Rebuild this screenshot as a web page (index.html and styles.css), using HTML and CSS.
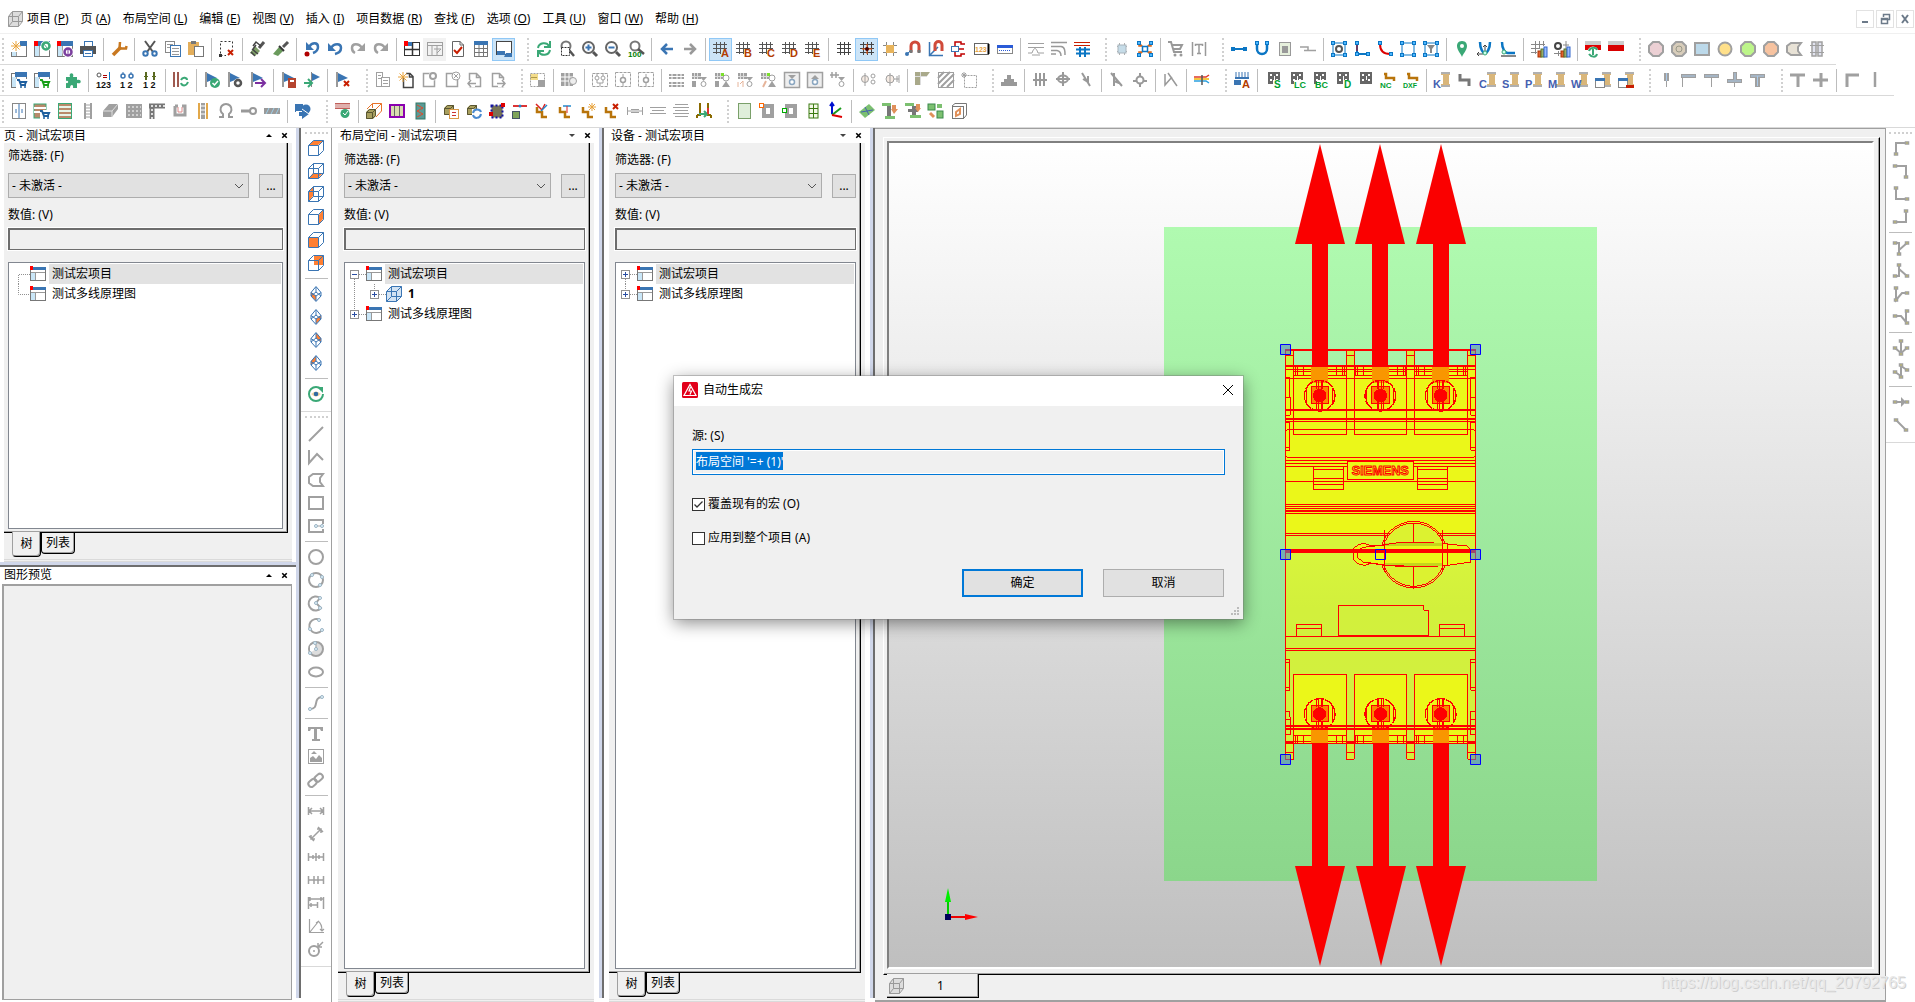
FILE: index.html
```
<!DOCTYPE html>
<html lang="zh-CN">
<head>
<meta charset="utf-8">
<meta name="viewport" content="width=device-width, initial-scale=1">
<title>自动生成宏</title>
<link rel="stylesheet" href="styles.css">
</head>
<body>
<header>
  <nav class="menubar">
    <span class="cube" data-icon="cubeGrey"></span>
    <a href="#">项目 (<u>P</u>)</a><a href="#">页 (<u>A</u>)</a><a href="#">布局空间 (<u>L</u>)</a><a href="#">编辑 (<u>E</u>)</a><a href="#">视图 (<u>V</u>)</a><a href="#">插入 (<u>I</u>)</a><a href="#">项目数据 (<u>R</u>)</a><a href="#">查找 (<u>F</u>)</a><a href="#">选项 (<u>O</u>)</a><a href="#">工具 (<u>U</u>)</a><a href="#">窗口 (<u>W</u>)</a><a href="#">帮助 (<u>H</u>)</a>
    <div class="winbtns">
      <button aria-label="最小化" data-icon="wmin"></button><button aria-label="还原" data-icon="wrestore"></button><button aria-label="关闭" data-icon="wclose"></button>
    </div>
  </nav>
  <div class="toolbar" data-tools="row1"></div>
  <div class="toolbar" data-tools="row2"></div>
  <div class="toolbar last" data-tools="row3"></div>
</header>
<main>
  <div class="column pages">
    <section class="panel">
      <h2 class="caption">页 - 测试宏项目<span class="tri up"></span><button aria-label="关闭" data-icon="capx"></button></h2>
      <div class="frame">
        <div class="sheet high">
          <label for="f1">筛选器: (F)</label>
          <div class="filter"><select id="f1"><option>- 未激活 -</option></select><button>...</button></div>
          <label for="v1">数值: (V)</label>
          <input class="value" id="v1" type="text">
          <ul class="tree">
            <li><span class="twig" data-icon="twTop"></span><span class="ico" data-icon="project"></span><span class="name sel">测试宏项目</span></li>
            <li><span class="twig" data-icon="twEnd"></span><span class="ico" data-icon="project"></span><span class="name">测试多线原理图</span></li>
          </ul>
        </div>
        <div class="tabs"><button class="on">树</button><button>列表</button></div>
      </div>
    </section>
    <div class="hsplit"></div>
    <section class="panel">
      <h2 class="caption tall">图形预览<span class="tri up"></span><button aria-label="关闭" data-icon="capx"></button></h2>
      <div class="preview"></div>
    </section>
  </div>
  <div class="vsplit"></div>
  <div class="vbar left" data-tools="left"></div>
  <section class="panel narrow first">
    <h2 class="caption">布局空间 - 测试宏项目<span class="tri"></span><button aria-label="关闭" data-icon="capx"></button></h2>
    <div class="frame">
      <div class="sheet">
        <label for="f2">筛选器: (F)</label>
        <div class="filter"><select id="f2"><option>- 未激活 -</option></select><button>...</button></div>
        <label for="v2">数值: (V)</label>
        <input class="value" id="v2" type="text">
        <ul class="tree">
          <li><span class="twig" data-icon="twMinus"></span><span class="ico" data-icon="project"></span><span class="name sel">测试宏项目</span></li>
          <li><span class="twig" data-icon="twPass"></span><span class="twig" data-icon="twPlusUp"></span><span class="ico" data-icon="space"></span><span class="name"><b>1</b></span></li>
          <li><span class="twig" data-icon="twPlusUp"></span><span class="ico" data-icon="project"></span><span class="name">测试多线原理图</span></li>
        </ul>
      </div>
      <div class="tabs"><button class="on">树</button><button>列表</button></div>
    </div>
  </section>
  <div class="vsplit"></div>
  <section class="panel narrow">
    <h2 class="caption">设备 - 测试宏项目<span class="tri"></span><button aria-label="关闭" data-icon="capx"></button></h2>
    <div class="frame">
      <div class="sheet">
        <label for="f3">筛选器: (F)</label>
        <div class="filter"><select id="f3"><option>- 未激活 -</option></select><button>...</button></div>
        <label for="v3">数值: (V)</label>
        <input class="value" id="v3" type="text">
        <ul class="tree">
          <li><span class="twig" data-icon="twPlus"></span><span class="ico" data-icon="project"></span><span class="name sel">测试宏项目</span></li>
          <li><span class="twig" data-icon="twPlusUp"></span><span class="ico" data-icon="project"></span><span class="name">测试多线原理图</span></li>
        </ul>
      </div>
      <div class="tabs"><button class="on">树</button><button>列表</button></div>
    </div>
  </section>
  <div class="vsplit"></div>
  <section class="doc">
    <div class="mdi">
      <div class="viewport">
        <svg class="scene" viewBox="889 143 983 824" preserveAspectRatio="xMidYMid meet">
          <defs>
            <linearGradient id="plate" x1="0" y1="0" x2="0" y2="1"><stop offset="0" stop-color="#b0fab0"/><stop offset="1" stop-color="#8bd68b"/></linearGradient>
            <linearGradient id="mid" x1="0" y1="0" x2="0" y2="1"><stop offset="0" stop-color="#d8f53c"/><stop offset=".3" stop-color="#d2f03c"/><stop offset="1" stop-color="#d2f040"/></linearGradient>
            <g id="screw" fill="none" stroke="#f00" stroke-width="3">
              <rect x="-25" y="-26" width="52" height="50" fill="#f98a00"/>
              <circle r="46" stroke-width="4" stroke-dasharray="30 3"/>
              <path d="M-40-24V24M40-24V24M-9-46V-20M-4-46V-20M5-46V-20M9-46V-20M-9 46V20M-4 46V20M5 46V20M9 46V20"/>
              <circle r="19" fill="#f00"/>
            </g>
            <path id="arrow" d="M0 0L25 100H8V223H-8V100H-25Z" fill="#fa0000"/>
          </defs>
          <rect x="1164" y="227" width="433" height="654" fill="url(#plate)"/>
          <g transform="translate(1150 130) scale(.33333)" stroke="#f00" stroke-width="3" fill="none" shape-rendering="crispEdges">
            <path d="M406 710H977V1260H406Z" fill="#ebf719" stroke="none"/>
            <path d="M406 660H430V710H406ZM590 660H613V710H590ZM770 660H793V710H770ZM953 660H977V710H953Z" fill="#d2f03c"/>
            <path d="M406 1211H977V1260H406Z" fill="#d6f53a" stroke="none"/>
            <path d="M406 1260V660H977V1260M430 676H406M590 676H613M770 676H793M953 676H977"/>
            <path d="M406 660H977M406 707H977" stroke-width="6"/>
            <path d="M406 718H977M430 724H590M613 724H770M793 724H953M406 745H977M430 736H590M613 736H770M793 736H953M436 710V736M443 710V736M460 710V736M560 710V736M577 710V736M584 710V736M618 710V736M624 710V736M640 710V736M742 710V736M760 710V736M766 710V736M800 710V736M806 710V736M823 710V736M922 710V736M940 710V736M947 710V736"/>
            <path d="M430 710V913H590V710M613 710V913H770V710M793 710V913H953V710M406 742H419V802H421V856H406M406 802H421M977 742H962V856H977M962 802H977M406 877H419V961H406M406 952H419M977 877H962V961H977M962 952H977"/>
            <path d="M406 840H977M406 867H977" stroke-width="6"/>
            <path d="M406 875H977M412 898H971L977 904M412 898L406 904M412 982H971M406 976L412 982M977 976L971 982M406 991H977M406 1000H592M791 1000H977M406 1009H592M791 1009H977M406 1054H977"/>
            <path d="M592 994H791V1049H592ZM490 1010H581V1078H490ZM490 1018H581M490 1045H581M490 1063H581M802 1010H893V1078H802ZM802 1018H893M802 1045H893M802 1063H893"/>
            <path d="M406 1123H977M406 1129H977M406 1135H977M406 1150H977M406 1211H977M406 1217H977"/>
            <path d="M406 1142H977" stroke-width="6"/>
            <path d="M483 710H534V760H483ZM666 710H717V760H666ZM846 710H897V760H846Z" fill="#f99600" stroke="none"/>
            <use href="#screw" x="509" y="797"/><use href="#screw" x="691" y="797"/><use href="#screw" x="872" y="797"/>
            <text x="691" y="1035" class="brand" text-anchor="middle">SIEMENS</text>
          </g>
          <g transform="translate(1150 540) scale(.33333)" stroke="#f00" stroke-width="3" fill="none" shape-rendering="crispEdges">
            <path d="M406 30H977V610H406Z" fill="url(#mid)" stroke="none"/>
            <path d="M406 608H431V658H406ZM589 608H613V658H589ZM770 608H794V658H770ZM953 608H977V658H953ZM406 637H431M589 637H613M770 637H794M953 637H977" fill="#d2f03c"/>
            <path d="M406 30V658M977 30V658"/>
            <path d="M431 610V403H589V610M613 610V403H770V610M794 610V403H953V610" fill="#ebf719"/>
            <path d="M565 196H821V211H836V287H565ZM439 289V253H515V289M439 265H515M868 289V253H944V289M868 265H944M406 289H977M406 325H977M406 331H977M406 358H419V451H406M406 367H419M406 442H419M977 358H962V451H977M962 367H977M962 442H977M406 514H419V532H421V585H406M406 538H421M977 514H962V585H977M962 538H977"/>
            <path d="M431 586H589M613 586H770M794 586H953M406 604H977M406 610H977M436 586V610M443 586V610M460 586V610M560 586V610M577 586V610M618 586V610M624 586V610M640 586V610M742 586V610M760 586V610M800 586V610M806 586V610M823 586V610M922 586V610M940 586V610"/>
            <path d="M483 560H534V610H483ZM666 560H717V610H666ZM849 560H897V610H849Z" fill="#f99600" stroke="none"/>
            <path d="M406 558H977M406 567H977" stroke-width="6"/>
            <use href="#screw" x="509" y="522"/><use href="#screw" x="691" y="522"/><use href="#screw" x="872" y="522"/>
            <circle cx="791" cy="44" r="95" fill="#dcf230"/><circle cx="791" cy="44" r="100"/>
            <path d="M611 25L626 14L643 10L660 16L705 16L745 9L791 7L850 9L893 12L950 18L962 28V66L893 76L850 79L745 79L691 73L640 66L660 70L645 77L626 72L611 60Z" fill="#ebf719"/>
            <path d="M705 8H877V18H705ZM705 69H877V79H705Z" fill="#c5d51c" stroke="none"/>
            <path d="M622 36V52L640 66L705 76L791 79M622 30L640 22L691 16L745 8M704-30V95M877-30V95M893 10V76M791-52V7M791 79V147"/>
            <path d="M406 33H977" stroke-width="12"/>
          </g>
          <use href="#arrow" x="1320" y="144"/><use href="#arrow" x="1380" y="144"/><use href="#arrow" x="1441" y="144"/>
          <g transform="matrix(1 0 0 -1 0 966)"><use href="#arrow" x="1320"/><use href="#arrow" x="1381"/><use href="#arrow" x="1441"/></g>
          <path d="M1280.500 344.500h10v10h-10zM1470.500 344.500h10v10h-10zM1280.500 549.500h10v10h-10zM1470.500 549.500h10v10h-10zM1280.500 754.500h10v10h-10zM1470.500 754.500h10v10h-10z" fill="rgba(80,128,200,.55)" stroke="#00f"/>
          <path d="M1375.500 549.500h10v10h-10z" fill="none" stroke="#00f"/>
          <path d="M948 916V900" stroke="#0c0" stroke-width="2"/><path d="M948 888L951 902H945Z" fill="#0e0"/>
          <path d="M948 917H967" stroke="#e00" stroke-width="2"/><path d="M978 917L965 920V914Z" fill="#f00"/>
          <rect x="945" y="914" width="6" height="6" fill="#00005a"/>
        </svg>
      </div>
    </div>
    <div class="doctabs"><button><span data-icon="cubeGrey"></span>1</button></div>
  </section>
  <div class="vbar right" data-tools="right"></div>
</main>

<form class="dialog" role="dialog" aria-labelledby="dlgtitle">
  <div class="dlgbar"><span data-icon="eplan"></span><h1 id="dlgtitle">自动生成宏</h1><button type="button" aria-label="关闭" data-icon="dlgx"></button></div>
  <div class="dlgbody">
    <label for="src">源: (S)</label>
    <input id="src" type="text" value="布局空间 '=+ (1)'">
    <label class="tick"><input type="checkbox" checked>覆盖现有的宏 (O)</label>
    <label class="tick"><input type="checkbox">应用到整个项目 (A)</label>
    <div class="actions"><button type="button" class="ok">确定</button><button type="button">取消</button></div>
  </div>
  <span class="sizer" data-icon="sizer"></span>
</form>
<div class="watermark">https://blog.csdn.net/qq_20792765</div>
<script src="script.js"></script>
</body>
</html>
```
FILE: styles.css
```
* { box-sizing: border-box; }
body {
  margin: 0;
  height: 100vh;
  display: flex;
  flex-direction: column;
  overflow: hidden;
  background: #fff;
  color: #000;
  font: 12px/16px "Noto Sans", "Noto Sans CJK SC", sans-serif;
}
button, input, select { font: inherit; color: inherit; border-radius: 0; margin: 0; padding: 0; }
svg { display: block; overflow: visible; }

/* menu */
.menubar { display: flex; align-items: center; gap: 12px; height: 34px; padding: 4px 1px 0 7px; border-bottom: 1px solid #f0f0f0; }
.menubar a { color: inherit; text-decoration: none; white-space: nowrap; }
.menubar .cube { margin-right: -8px; }
.winbtns { display: flex; gap: 2px; margin-left: auto; }
.winbtns button { width: 18px; height: 18px; background: #fff; border: 1px solid #e2e2e2; }

/* tool bars */
.toolbar { display: flex; width: fit-content; height: 31px; padding: 0 8px 0 0; border-bottom: 1px solid #d9d9d9; align-items: center; }
.toolbar.last { width: auto; height: 32px; padding-bottom: 1px; }
.tool { flex: none; width: 23px; height: 23px; border: 1px solid transparent; background: none; padding: 0; display: flex; align-items: center; justify-content: center; }
.tool.on { background: #cce4f7; border-color: #90c8f6; }
.tool.dim { background: #f2f2f2; }
.sep { flex: none; width: 8px; height: 23px; border-left: 1px solid #bdbdbd; background: #fff; margin-left: 4px; margin-right: -4px; }
.grip { flex: none; width: 17px; height: 23px; border-right: 2px dotted #d0d0d0; margin: 0 3px 0 -3px; }
.toolbar .grip:first-child { width: 7px; }

main { flex: 1; min-height: 0; display: flex; }
.column { width: 296px; padding-bottom: 2px; display: flex; flex-direction: column; }
.vsplit { flex: none; width: 5px; background: #d0d7ea; border-right: 2px solid #6e6e6e; margin-bottom: 4px; }
.hsplit { flex: none; height: 5px; background: #d0d7ea; border-bottom: 2px solid #6e6e6e; }
.vbar { flex: none; width: 31px; display: flex; flex-direction: column; align-items: center; border-right: 1px solid #a0a0a0; }
.vbar.right { width: 29px; border: 0; }
.vbar .grip, .vbar .grip:first-child { width: 23px; height: 8px; margin: -4px 0 4px; border: 0; border-bottom: 2px dotted #d0d0d0; }
.vbar .grip:first-child { margin: -2px 0 2px; }
.vbar .sep { width: 23px; height: 1px; border: 0; background: #bdbdbd; margin: 4px 0 3px; }
.vbar .end { flex: none; width: 100%; height: 1px; background: #d9d9d9; margin: 6px 0 2px; }

/* docked panels */
.panel { flex: 1 1 0; min-height: 0; min-width: 0; display: flex; flex-direction: column; }
.panel.narrow { flex: none; width: 266px; padding-left: 5px; }
.panel.narrow.first { width: 267px; padding-left: 6px; }
.caption { flex: none; height: 15px; margin: 0; padding: 0 7px 0 4px; display: flex; align-items: center; font: inherit; }
.caption.tall { height: 17px; }
.narrow .caption { padding: 0 7px 0 2px; }
.caption button { width: 9px; height: 14px; border: 0; background: none; }
.tri { margin: 0 8px 0 auto; border: 3px solid transparent; border-top: 3px solid #444; border-bottom: 0; }
.tri.up { border-top: 0; border-bottom: 3px solid #000; }
.frame { flex: 1; min-height: 0; display: flex; flex-direction: column; margin: 0 4px 0 4px; background: #f0f0f0; border-bottom: 3px double #dadada; }
.narrow .frame { margin: 0 5px 0 0; }
.sheet { flex: 1; min-height: 0; display: flex; flex-direction: column; margin-right: 4px; padding: 9px 4px 3px 4px; border: solid #000; border-width: 0 1px 1px 0; box-shadow: inset -1px -1px #a0a0a0; }
.narrow .sheet { padding-left: 6px; }
.sheet.high { padding-top: 5px; }
.sheet label { height: 21px; }
.sheet.high label:first-child { height: 25px; }
.filter { display: flex; gap: 10px; margin-bottom: 9px; }
.filter select {
  flex: 1; height: 25px; padding: 0 8px 0 3px; border: 1px solid #adadad; appearance: none;
  background: #e1e1e1 url("data:image/svg+xml,%3Csvg xmlns='http://www.w3.org/2000/svg' width='10' height='6'%3E%3Cpath d='M1 1L5 5L9 1' fill='none' stroke='%23555'/%3E%3C/svg%3E") no-repeat right 4px center;
}
.filter button { width: 24px; height: 24px; align-self: flex-end; border: 1px solid #adadad; background: #e1e1e1; }
.value { flex: none; height: 22px; margin-bottom: 3px; border: solid #6d6d6d; border-width: 2px 1px 1px 2px; background: #f0f0f0; outline: 1px solid #fff; }
.tree { flex: 1; min-height: 0; margin: 9px 0 0; padding: 1px; list-style: none; background: #fff; border: 1px solid #828790; }
.tree li { display: flex; height: 20px; align-items: center; }
.twig, .ico { flex: none; }
.name { flex: 1; height: 20px; line-height: 19px; margin-left: 3px; padding-left: 3px; }
.name.sel { background: #e2e2e2; }
.tabs { flex: none; height: 26px; padding-left: 8px; display: flex; align-items: flex-start; }
.tabs button { width: 34px; height: 21px; background: #f0f0f0; border: 1px solid #000; border-top: 0; border-radius: 0 0 4px 4px; box-shadow: inset -1px -1px #a0a0a0; }
.tabs .on { width: 29px; height: 25px; margin-top: -1px; border-left-color: #a0a0a0; }
.preview { flex: 1; margin: 0 4px 0 2px; background: #f0f0f0; border: solid #a0a0a0; border-width: 2px 1px 1px 2px; }

/* drawing window */
.doc { flex: 1; min-width: 0; display: flex; flex-direction: column; background: #f0f0f0; border: solid #a0a0a0; border-width: 1px 1px 2px 0; }
.mdi { flex: 1; min-height: 0; margin: 8px 5px 0 8px; padding: 3px 5px 5px 3px; display: flex; border: 1px solid #000; border-top-color: #fff; border-left-color: #fff; box-shadow: inset -1px -1px #a0a0a0; }
.viewport { flex: 1; min-width: 0; border: 2px solid #808080; border-right-color: #fff; border-bottom-color: #fff; background: linear-gradient(#fff, #bfbfbf); }
.scene { width: 100%; height: 100%; }
.brand { font: bold 38px "Liberation Sans", sans-serif; stroke-width: 3px; }
.doctabs { flex: none; height: 25px; padding-left: 12px; }
.doctabs button { width: 92px; height: 24px; margin-top: -1px; padding: 0 0 0 1px; display: flex; align-items: center; gap: 33px; background: #f0f0f0; border: solid #000; border-width: 0 1px 1px 0; box-shadow: inset -1px -1px #a0a0a0; }

/* dialog window */
.dialog { position: absolute; left: 674px; top: 376px; width: 569px; height: 243px; display: flex; flex-direction: column; background: #f0f0f0; box-shadow: 0 0 0 1px rgba(120,120,120,.4), 0 4px 16px rgba(0,0,0,.45); }
.dlgbar { height: 30px; padding: 0 7px 2px 8px; display: flex; align-items: center; background: #fff; }
.dlgbar h1 { margin: 0 auto 0 5px; font: inherit; }
.dlgbar button { width: 16px; height: 16px; border: 0; background: none; }
.dlgbody { display: flex; flex-direction: column; padding: 22px 18px 0; }
.dlgbody #src { height: 26px; margin: 5px 0 20px; padding: 0 0 3px 3px; border: 1px solid #0078d7; outline: 0; background: #f0f0f0; box-shadow: inset 0 0 0 1px #fff; }
#src::selection { background: #0078d7; color: #fff; }
.tick { display: flex; align-items: center; gap: 3px; height: 18px; margin-bottom: 16px; }
.tick input { appearance: none; width: 13px; height: 13px; border: 1px solid #333; background: #fff; }
.tick input:checked { background: #fff url("data:image/svg+xml,%3Csvg xmlns='http://www.w3.org/2000/svg' width='11' height='11'%3E%3Cpath d='M1.500 5.500L4 8L9.500 2.500' fill='none' stroke='%23333' stroke-width='1.300'/%3E%3C/svg%3E"); }
.actions { display: flex; justify-content: flex-end; gap: 20px; margin: 6px 1px 0; }
.actions button { width: 121px; height: 28px; background: #e1e1e1; border: 1px solid #adadad; }
.actions .ok { border: 2px solid #0078d7; }
.sizer { position: absolute; right: 3px; bottom: 3px; }
.watermark { position: absolute; right: 9px; bottom: 9px; font: 16px/20px "Liberation Sans", sans-serif; color: #e9e9e9; text-shadow: 1px 1px 0 #cfcfcf; }
```
FILE: script.js
```
const G = '#a0a0a0', D = '#555', B = '#3a75b3', V = '#3aa876', O = '#ff7f32', K = '#b8740b', N = '#b33c00';
const L = (d, c = G, w = 1) => `<path d="${d}" fill="none" stroke="${c}" stroke-width="${w}"/>`;
const F = (d, c = G) => `<path d="${d}" fill="${c}"/>`;
const R = (x, y, w, h, f = 'none', s = 'none', k = 1) => `<rect x="${x}" y="${y}" width="${w}" height="${h}" fill="${f}" stroke="${s}" stroke-width="${k}"/>`;
const C = (x, y, r, f = 'none', s = 'none', k = 1) => `<circle cx="${x}" cy="${y}" r="${r}" fill="${f}" stroke="${s}" stroke-width="${k}"/>`;
const T = (x, y, s, c, z = 9) => `<text x="${x}" y="${y}" fill="${c}" font-size="${z}" font-weight="700" font-family="Liberation Sans, sans-serif">${s}</text>`;
const X = (x, y, c = '#c81e00') => L(`M${x} ${y}l5 5m0-5l-5 5`, c, 2);

const win = R(.5, 1.5, 15, 14, '#fff', '#777') + R(4, 0, 12, 5, B) + R(1, 5, 4, 10, '#c9e6f7') + L('M5.500 5V15', G);
const redc = R(0, 0, 4, 5, '#f00');
const star = L('M5 0V10M0 5H10M1.500 1.500L8.500 8.500M8.500 1.500L1.500 8.500', '#e8a33c');
const doc = L('M2.500 1.500H9.500L13.500 5.500V14.500H2.500ZM9.500 1.500V5.500H13.500', G, 1.500);
const grid = c => L('M4.500 1V14M8.500 1V14M12.500 1V14M1 3.500H15M1 7.500H15M1 11.500H15', c);
const gridL = s => L('M3.500 1V13M7.500 1V13M11.500 1V8M0 3.500H14M0 7.500H14M0 11.500H8', D) + T(8, 16, s, N, 11);
const flag = L('M2 0V15', '#777', 1.500) + F('M3 1L13 6L3 10Z', B);
const cart = c => L('M6 8H8L10 13H15M9 10H15L14 12', c, 2) + C(10, 15, 1, c) + C(14, 15, 1, c);
const die = R(3, 0, 12, 12, '#666') + R(5, 2, 2, 2, '#fff') + R(11, 2, 2, 2, '#fff') + R(5, 7, 2, 2, '#fff') + R(11, 7, 2, 2, '#fff') + R(9, 4, 1, 4, '#fff');
const spool = F('M7 0H16V3H15V12H16V15H7V12H9V3H7Z', '#d9b67a') + R(7, 0, 9, 2, '#b0b0b0') + R(7, 13, 9, 2, '#b0b0b0');
const cable = s => spool + T(-1, 16, s, '#4560b0', 11);
const cube = L('M.500 5.500H10.500V15.500H.500ZM.500 5.500L5.500 .500H15.500L10.500 5.500M15.500 .500V10.500L10.500 15.500', B);
const cubeBack = L('M5.500 .500V10.500H15.500M5.500 10.500L.500 15.500', B);
const iso = L('M8 .500L13 6.500V10L8 15.500L3 10V6.500ZM3 6.500L8 10L13 6.500M8 10V15', B) + L('M8 1V6L3 10M8 6L13 10', B);
const node = (x, y) => R(x - 1.500, y - 1.500, 3, 3, '#4db8ff', '#0b76c4');
const yn = (x, y) => R(x - 1.500, y - 1, 3, 2, '#ffe600', G, 1.500);
const cn = (x, y) => C(x, y, 1.500, '#e3f3fb', '#9bb4c4');
const rail = L('M5 0V16M11 0V16', G, 2) + L('M5 2H11M5 5H11M5 8H11M5 11H11M5 14H11', G);
const box3 = F('M1 5L4 2H11V9L8 12H1Z', '#a89f5e') + L('M1.500 5.500H7.500V11.500H1.500ZM1.500 5.500L4.500 2.500H10.500V8.500L7.500 11.500M7.500 5.500L10.500 2.500', '#5a5632');
const sym = (a, b) => R(0, 1, 9, 6, G) + L('M2.500 1V7M5.500 1V7M0 4.500H9', '#ddd') + a + b;
const pour = L('M2 4V9H7V14H12', K, 2.500);
const hexa = 'M5 1H11L15 5V11L11 15H5L1 11V5Z';

const I = {
  cubeGrey: F('M4 1H15V10L11 15H1V6Z', '#ddd') + L('M1.500 5.500H11.500V15.500H1.500ZM1.500 5.500L5.500 .500H15.500L11.500 5.500M15.500 .500V10.500L11.500 15.500M5.500 .500V10.500H15.500M5.500 10.500L1.500 15.500', '#999'),
  wmin: R(5, 10, 6, 2, '#6c7a89'), wrestore: L('M6.500 6V3.500H12.500V8.500H11M4.500 7.500H10.500V12.500H4.500ZM4 8.500H11', '#6c7a89', 1.500), wclose: L('M5 4L11 12M11 4L5 12', '#6c7a89', 2),
  capx: L('M4 4L12 12M12 4L4 12', '#000', 2.800),
  project: R(.500, 1.500, 15, 13, '#fff', '#777') + R(3, 1, 13, 3, B) + R(1, 6, 4, 8, '#c9e6f7') + R(0, 0, 3, 4, '#f00') + L('M5.500 6V14M1 6.500H15', '#999'),
  space: F('M4 1H15V10L11 15H1V6Z', '#d3e3f3') + cube + L('M5.500 .500V10.500H15.500M5.500 10.500L.500 15.500', B),
  eplan: `<rect width="16" height="16" rx="1.500" fill="#e2001a"/>` + L('M8 2.500L14 13.500H2ZM8.500 5L7 9H9.500L8 12.500', '#fff', 1.200),
  dlgx: L('M3 3L13 13M13 3L3 13', '#000'),
  sizer: F('M13 7h2v2h-2zM13 10h2v2h-2zM13 13h2v2h-2zM10 10h2v2h-2zM10 13h2v2h-2zM7 13h2v2H7z', '#bbb'),

  newPage: win + F('M0 0H9V11H0Z', '#fff') + star,
  savePage: win + redc + C(12, 5, 5.500, '#fff') + C(12, 5, 3.500, 'none', V, 2.500) + L('M9 2L14 8', V),
  pagePurple: win + redc + C(11, 11, 5.500, '#fff') + C(11, 11, 3.500, 'none', '#7b3f9e', 2.500) + L('M11 8V14', '#7b3f9e'),
  print: R(4, 0, 9, 5, B) + R(5, 1, 7, 4, '#fff') + F('M0 5H16V13H0Z', D) + R(3.500, 9.500, 9, 6, '#fff', B) + L('M5 12.500H11', B),
  wrench: L('M2 14L10 6', '#c87820', 3.500) + L('M9 1L8.500 7.500H15L15.500 5', '#c87820', 2.500),
  cut: L('M3 0L11 11M13 0L5 11', '#555', 2) + C(3.500, 12.500, 2.200, 'none', B, 2) + C(12.500, 12.500, 2.200, 'none', B, 2),
  copy: R(.500, .500, 9, 11, '#fff', '#888') + R(5.500, 4.500, 10, 11, '#fff', B) + L('M2 3.500H8M2 6.500H5M7 7.500H14M7 10.500H14M7 13.500H14', '#999'),
  paste: R(0, 1, 11, 13, '#e3ae5b') + R(3, 0, 5, 3, '#777') + R(6.500, 5.500, 9, 10, '#fff', '#777'),
  selDel: `<rect x="1.500" y=".500" width="12" height="14" fill="none" stroke="#333" stroke-dasharray="2 2"/>` + R(7, 8, 9, 8, '#fff') + X(9, 9) + R(0, 13, 3, 3, '#333'),
  brush1: L('M14 1L9 7', '#555', 3) + F('M5 5L10 10L5 15L0 12Z', '#7e9f68') + L('M2 8L8 13M1 11L5 15M6 4L3 8M11 5L6 1L3 5', '#444', 1.500),
  brush: L('M15 1L10 6', '#555', 3) + F('M6 6L10 10L5 15L0 13Z', '#6a9a5c') + L('M6 5L11 10', '#333', 2),
  undoList: F('M2 1V9H10Z', B) + L('M5 6C8 1 14 1 14 6C14 9 12 11 9 12', B, 2.500) + C(3, 13, 2.500, '#b00000'),
  undo: F('M1 2V10H9Z', B) + L('M4 7C7 2 14 2 14 7C14 10 12 12 8 13', B, 2.500),
  redo: F('M15 2V10H7Z') + L('M12 7C9 2 2 2 2 7C2 9 3 11 5 12', G, 2.500),
  layout: R(.500, 1.500, 15, 13, '#fff', '#333') + L('M1 8.500H15M8.500 2V14', '#333', 1.500) + R(1, 1, 7, 4, B) + R(0, 0, 4, 5, '#f00'),
  layoutGrey: R(.500, 1.500, 15, 13, 'none', G) + L('M1 4.500H15M5 5V14M10 12L14 8M7 8H14M10 5V14'),
  check: L('M2.500 .500H10L13.500 4V15.500H2.500ZM10 0V4H14', '#666') + L('M4 9L7 12L12 6', '#c81e00', 2),
  table: R(1.500, .500, 13, 15, '#fff', '#777') + R(1, 0, 14, 4, B) + L('M6 4V15M10.500 4V15M1 7.500H15M1 11.500H15', '#777'),
  screen: R(.500, .500, 15, 13, '#fff', '#444') + F('M1 10H9V14H1ZM10 12H16V16H8Z', B),
  refresh: L('M2 7C3 1 11 1 13 5M14 0V6H8M14 9C13 15 5 15 3 11M2 16V10H8', V, 2),
  zoomSel: C(7, 5, 4.500, 'none', '#777', 2) + L('M10 9L15 15', '#555', 2.500) + `<rect x="2.500" y="6.500" width="8" height="8" fill="#fff" stroke="#333" stroke-dasharray="2 1"/>`,
  zoomIn: C(6.500, 6.500, 5.500, '#fff', '#666', 2) + L('M11 11L15 15', '#555', 3) + L('M6.500 3.500V9.500M3.500 6.500H9.500', B, 2),
  zoomOut: C(6.500, 6.500, 5.500, '#fff', '#666', 2) + L('M11 11L15 15', '#555', 3) + L('M3.500 6.500H9.500', B, 2),
  zoom100: C(7, 5, 4.500, 'none', '#777', 2) + L('M10 8L16 13', '#555', 2.500) + T(0, 16, '100', '#008000', 8),
  back: L('M8 3L3 8L8 13M3 8H14', B, 2.500), fwd: L('M8 3L13 8L8 13M13 8H2', '#999', 2.500),
  gridA: gridL('A'), gridB: gridL('B'), gridC: gridL('C'), gridD: gridL('D'), gridE: gridL('E'),
  grid: grid('#444'), snap: grid('#444') + L('M8 3V13M3 8H13', '#ff5500') + C(8, 8, 2, '#400'),
  gsel: L('M4.500 1V15M11.500 1V15M1 4.500H15M1 11.500H15', '#888') + R(4, 4, 8, 8, '#e8b45c'),
  magnet: L('M6 11V5A4 4 0 0 1 14 5V11', '#d04a3a', 3) + L('M6 9V12M14 9V12', '#777', 3) + C(2, 13, 2, B) + L('M2 13L5 10', B),
  magnetAxis: L('M1.500 1V14.500H15M1 15L10 6', B, 1.500) + L('M7 10V4A3.500 3.500 0 0 1 14 4V10', '#d04a3a', 3),
  conn: R(.500, 5.500, 7, 5, '#fff', B) + L('M4 5V1H10V3H14M4 11V15H10V13H14M8 8H13', '#c00000', 1.500),
  ruler123: R(.500, 2.500, 14, 11, '#fff', '#666') + T(1, 11, '123', '#e8a33c', 7) + L('M14.500 3V13', '#000', 2),
  ruler: R(.500, 4.500, 15, 8, '#fff', '#888') + R(0, 4, 16, 3, '#2a5bd7') + `<path d="M2 9.500H14" stroke="#2a5bd7" stroke-dasharray="1 1"/>`,
  wave: L('M0 2.500H16M0 6.500H16M0 12H4C6 6 8 6 10 12H16M4 14H12'),
  rss: L('M0 1.500H16M0 5.500H10C14 6 14 10 14 14M0 9.500H6C9 10 10 12 10 15M0 13H5', '#999', 1.500),
  lattice: L('M0 1.500H16M0 4.500H16', '#c81e00') + L('M2 8.500H16M2 12.500H16M6 6V16M11 6V16', '#0b76c4', 2),
  chip: L('M3 5.500H13M3 10.500H13M5.500 2V14M10.500 2V14', '#b0b0b0') + R(4, 4, 8, 8, '#c6dce8', '#a8b4bc'),
  tree: L('M3 3L6 6M13 3L10 6M3 13L6 10M13 13L10 10M2 2V5H5M14 2V5H11M2 14V11H5M14 14V11H11', '#d9691e', 1.500) + R(5.500, 5.500, 5, 5, '#fff', '#0b76c4', 1.500) + node(2, 2) + node(14, 2) + node(2, 14) + node(14, 14),
  cart: L('M0 1H3L6 11H14M4 4H14L12 8H5', '#999', 2) + C(7, 14, 1.500, '#999') + C(13, 14, 1.500, '#999'),
  tbox: L('M1.500 1V15M14.500 1V15M4.500 5V3.500H11.500V5M8 4V12M6 12.500H10', '#999', 1.500),
  link1: L('M2 8H14', '#0b76c4', 2) + R(0, 6, 4, 4, '#0b76c4') + R(12, 6, 4, 4, '#0b76c4'),
  link2: L('M3 3V8A5 5 0 0 0 13 8V3', '#0b76c4', 2.500) + node(3, 2) + node(13, 2),
  sq: R(2.500, 1.500, 11, 13, '#e6f0dc', '#999') + R(5, 5, 6, 7, '#999'), jog: L('M0 6H8V9.500H16M4 9.500H8', G, 1.500),
  nodes: L('M2 2H14V14H2Z', '#0b76c4') + C(8, 8, 3, 'none', '#555', 2) + node(2, 2) + node(14, 2) + node(2, 14) + node(14, 14),
  nodeL: L('M3 3V13H13', '#0b76c4', 2) + L('M3 2V10', '#c00') + node(3, 2) + node(3, 13) + node(14, 13),
  nodeC: L('M3 3C3 10 6 13 13 13', '#d00', 2) + node(3, 2) + node(14, 13),
  nodeR: L('M2 2H14V14H2Z', '#0b76c4') + node(2, 2) + node(14, 2) + node(2, 14) + node(14, 14),
  nodeF: L('M2 2H14V14H2Z', '#0b76c4') + F('M4 4H12L9 8V12H7V8Z', '#888') + node(2, 2) + node(14, 2) + node(2, 14) + node(14, 14),
  pin: F('M8 0C12 0 13 3 13 5C13 9 9 13 8 16C7 13 3 9 3 5C3 3 4 0 8 0Z', V) + C(8, 5, 2, '#fff'),
  u1: L('M3 1C3 8 6 12 8 12C10 12 13 8 13 1', '#0b76c4', 2.500) + L('M8 4V10M6 6L8 4L10 6M0 13H6M2 11L0 13L2 15', '#444') + C(8, 12, 2, '#cfe', V),
  u2: L('M2 1C2 8 5 12 8 12H15', '#0b76c4', 2.500) + L('M1 15H16', '#888', 2) + C(4, 11, 2, '#cfe', V),
  g1: L('M4.500 0V13M8.500 0V7M12.500 0V5M0 3.500H14M0 7.500H9M0 11.500H6', '#888') + R(7, 10, 3, 6, '#e06030', '#a30') + R(10, 8, 3, 8, '#9a6', '#573') + R(13, 6, 3, 10, '#9bf', '#36c'),
  g2: C(4, 5, 3, 'none', '#444', 2) + L('M9 4H15M12 0V8M0 12.500H7M4.500 10V15', '#888') + R(7, 10, 3, 6, '#e06030', '#a30') + R(10, 8, 3, 8, '#9a6', '#573') + R(13, 6, 3, 10, '#9bf', '#36c'),
  redS: R(0, 0, 16, 4, '#ccc') + R(0, 4, 16, 5, '#e00000') + C(8, 11, 5.500, '#fff') + L('M4 10C5 6 11 6 12 9M12 13C11 17 6 16 4 13M8 8V14', V, 2),
  red: R(0, 0, 16, 4, '#ccc') + R(0, 4, 16, 6, '#d80000'),
  s1: F(hexa, '#ecd0d4') + L(hexa, G, 2), s2: F(hexa, '#d8cdbb') + L(hexa, G, 2) + C(8, 8, 3, 'none', '#998'),
  s3: R(1, 2, 14, 12, '#bcd9ea', G, 2), s4: C(8, 8, 6.500, '#ffe08a', G, 2), s5: F(hexa, '#bdf58a') + L(hexa, G, 2), s6: F(hexa, '#f7c3a0') + L(hexa, G, 2),
  s7: F('M5 2H15L12 6V10L15 14H5L1 11V5Z', '#e8e2d6') + L('M5 2H15L12 6V10L15 14H5L1 11V5Z', G, 2),
  s8: R(3, 1, 4, 14, '#e2e4f0', G, 1.500) + R(9, 1, 4, 14, '#e2e4f0', G, 1.500) + L('M1 4.500H15M1 11.500H15'),

  winCart: win + F('M5 7H16V16H5Z', '#fff') + cart('#1f5f9f'), winCartG: win + F('M5 7H16V16H5Z', '#fff') + cart('#18a018'),
  puzzle: F('M1 5H5C3 0 10 0 8 5H12V8C17 6 17 13 12 11V16H8C9 12 5 12 5 16H1V11C4 12 4 8 1 9Z', V),
  n123a: C(3, 3, 2, 'none', '#555') + L('M7 3.500H11M7 5.500H11', '#a00') + L('M13.500 0V8', '#0b76c4') + T(0, 16, '123', '#111', 9),
  n123b: C(4, 4, 2, 'none', B, 1.500) + C(12, 4, 2, 'none', B, 1.500) + L('M4 0V2M12 0V2', B) + T(1, 16, '1 2', '#111', 9),
  n123c: L('M4 0V8M12 0V8', '#5a6a20', 2) + L('M2 4.500H6M10 4.500H14', '#5a6a20') + T(1, 16, '1 2', '#111', 9),
  lines: L('M1 0V15M5 0V15', '#a05a50', 2) + L('M8 8C10 4 14 6 14 8M15 10C13 15 9 14 8 11', V, 2),
  flagCheck: flag + C(11, 11, 5, V) + L('M8.500 11L10.500 13L14 9', '#fff', 1.500), flagGear: flag + C(11, 11, 4.500, '#fff') + C(11, 11, 3, '#fff', '#555', 2.500),
  flagArrow: flag + L('M5 11H14M11 7L15 11L11 15', '#7b2fa0', 2), flagBook: flag + R(7, 6, 8, 10, '#b5442e') + R(9, 8, 4, 2, '#fff'),
  flagIn: L('M7.500 0V15', '#888') + F('M8 1L16 5L8 9Z', B) + L('M0 11H7M4 7L8 11L4 15', V, 2), flagDel: flag + X(9, 9),
  docs: R(1.500, .500, 6, 14, 'none', G) + R(6.500, 5.500, 8, 9, '#fff', G) + L('M3 3.500H6M3 6.500H6M8 8.500H13M8 11.500H13'),
  newDoc: L('M5.500 6V15.500H15V4.500L12 1.500H8M11.500 2V5H15', '#444', 1.500) + star,
  docA: doc + C(12, 4, 4.500, '#fff') + C(12, 4, 3, '#fff', G, 2), docB: doc + C(12, 4, 4, '#fff', G) + L('M10 2L14 6M14 2L10 6'),
  docL: doc + F('M0 8H8V15H0Z', '#fff') + L('M9 11.500H1M4 8L1 11.500L4 15', G, 1.500), docR: doc + F('M8 8H16V15H8Z', '#fff') + L('M7 11.500H15M12 8L15 11.500L12 15', G, 1.500),
  yel: R(0, 2, 8, 6, '#f3dc8a') + L('M1 5.500H7', '#b09a4a') + R(8, 8, 7, 7, G) + `<rect x=".500" y="1.500" width="14" height="13" fill="none" stroke="#a0a0a0" stroke-dasharray="2 1"/>`,
  gridg: R(0, 1, 12, 13, G) + L('M4 1V14M8 1V14M0 5H12M0 9H12', '#fff') + C(12, 9, 3.500, '#eee', G),
  da: `<rect x=".500" y="1.500" width="15" height="13" fill="none" stroke="#a0a0a0" stroke-dasharray="3 1"/>` + C(5, 6, 2, 'none', G) + C(11, 6, 2, 'none', G) + L('M5 1V4M11 1V4M5 8V11H11V8M8 11V14'),
  db: `<rect x=".500" y=".500" width="15" height="14" fill="none" stroke="#a0a0a0" stroke-dasharray="3 1"/>` + C(8, 8, 2.500, 'none', G, 1.500) + L('M8 2V5M8 11V14'),
  w1: L('M0 3H15M0 6H15M0 11H15M0 14H15', G, 2) + L('M3 0V16M8 0V16M12 0V16', '#fff'),
  f1: sym(F('M8 5H15L11.500 9Z'), C(11.500, 12, 2.500, 'none', G)) + R(0, 9, 4, 6, G),
  f2: sym(C(11, 6, 3, '#fff', G), F('M7 15H15L11 9Z')) + R(0, 9, 4, 6, G) + R(6, 1, 3, 3, '#7be02a'),
  f3: sym(F('M8 5H15L11.500 9Z'), C(11.500, 12, 2.500, 'none', G)) + L('M0 15V10M5 15V9L2 12', '#e6b49a'),
  f4: sym(C(11, 6, 3, '#fff', G), F('M7 15H15L11 9Z')) + R(6, 1, 3, 3, '#7be02a') + L('M2 15L5 9', '#e6b49a', 2),
  f5: R(.500, .500, 15, 15, '#eee', G, 1.500) + F('M4 3H12L8 7Z') + C(8, 10, 2.500, '#fff', '#8aa6c0', 1.500), f6: R(.500, .500, 15, 15, '#eee', G, 1.500) + F('M4 7H12L8 3Z') + C(8, 10, 2.500, '#fff', '#8aa6c0', 1.500),
  f7: L('M0 3H9M2 0V6M6 0V6', G, 1.500) + F('M8 5H15L11.500 9Z') + C(11.500, 12, 2.500, 'none', G),
  c1: C(4, 7, 3.500, '#f7ece4', G) + L('M4 1V14') + C(12, 4, 2, 'none', G) + C(12, 10, 2, 'none', G), c2: C(6, 7, 4, '#f7ece4', G) + L('M6 1V14M10 7H15M13 4V10M15 3V11'),
  tri: F('M0 0H15L12 4H6V13H0Z', '#a9a98a') + L('M0 4.500H12M5.500 0V13', '#ddd'),
  hatch: R(.500, .500, 15, 15, '#fff', G) + L('M0 6L6 0M0 12L12 0M3 15L16 2M9 15L16 8', G, 2),
  dash: `<rect x="3.500" y="3.500" width="12" height="12" fill="none" stroke="#a0a0a0" stroke-dasharray="2 1"/>` + L('M3 0V6M0 3H6M1 1L5 5M5 1L1 5'),
  stamp: F('M6 3H10V7H13V10H16V14H0V10H3V7H6Z', '#999'),
  x1: L('M1 8H15M4 1V14M8 1V14M12 1V14', '#999', 2), x2: L('M1 7H15M8 0V14', '#999', 2) + `<ellipse cx="8" cy="7" rx="5" ry="3.500" fill="none" stroke="#999" stroke-width="2"/>`,
  x3: L('M4 1L12 14M10 4V10L5 7', '#999', 2), x4: L('M2 1L13 14M5 1V9L10 11M5 14V9', '#999', 2), x5: L('M1 9H15M8 1V15', '#999', 2) + C(8, 8, 3.500, '#fff', '#999', 2),
  x6: L('M2 2V13L9 5M5 1L14 14', '#999', 1.500),
  rainbow: L('M0 5H12L15 3', '#e03a2a', 1.500) + L('M0 7H15', '#f2b200', 1.500) + L('M0 9H12L15 11', '#2aa0e0', 1.500) + L('M8 3V13', '#555', 1.500),
  comb: L('M2 0V5M5 0V5M8 0V5M11 0V5M14 0V5', B) + R(1, 5, 14, 2, B) + R(0, 8, 10, 5, B) + F('M7 7H16V16H7Z', '#fff') + T(8, 16, 'A', N, 11),
  dS: die + R(8, 8, 9, 9, '#fff') + T(9, 16, 'S', '#00a030', 10), dLC: die + R(6, 8, 11, 9, '#fff') + T(6, 16, 'LC', '#00a030', 9), dBC: die + R(6, 8, 11, 9, '#fff') + T(4, 16, 'BC', '#00a030', 9),
  dD: die + R(9, 8, 9, 9, '#fff') + T(10, 16, 'D', '#00a030', 10), dd: die,
  NC: L('M4 2H6V6H14V9', K, 2.500) + T(0, 16, 'NC', '#00a030', 8), DXF: L('M4 2H6V6H14V9', K, 2.500) + T(0, 16, 'DXF', '#00a030', 7),
  kK: cable('K'), kC: cable('C'), kS: cable('S'), kP: cable('P'), kM: cable('M'), kW: cable('W'), kj: L('M3 2V8H12V14', '#777', 3),
  kt: spool + R(.500, 6.500, 9, 9, '#fff', '#888') + R(0, 6, 10, 3, B), kr: spool + R(.500, 6.500, 9, 9, '#fff', '#888') + R(0, 6, 10, 3, B) + R(8, 13, 8, 3, '#c81e00'),
  p1: R(6, 1, 5, 8, G) + L('M8.500 9V15') + L('M8.500 1V9', '#a9c9e8'), p2: R(0, 2, 15, 4, G) + L('M1.500 5V15') + L('M1 4H14', '#a9c9e8'),
  p3: R(0, 2, 15, 4, G) + L('M7.500 5V15') + L('M1 4H14', '#a9c9e8'), p4: R(0, 7, 15, 4, G) + R(6, 0, 4, 7, G) + L('M7.500 11V15') + L('M1 9H14M8 1V8', '#a9c9e8'),
  p5: R(0, 2, 15, 4, G) + R(5, 6, 5, 9, G) + L('M1 4H14M7.500 4V14', '#a9c9e8'),
  t1: L('M0 3H15M8 3V15', G, 3), t2: L('M0 8H15M8 1V15', G, 3), t3: L('M3 15V3H15', G, 3), t4: L('M8 0V15', G, 2.500),

  cab: R(1.500, .500, 13, 15, '#fff', '#888') + L('M8 1V15M5 6V10M11 6V10', '#3a75b3'),
  mcart: R(0, 1, 12, 14, '#b98a6a', V) + L('M0 5H12M0 9H12', '#fff', 2) + R(6, 7, 10, 9, '#fff') + cart('#1f5f9f'),
  mlist: R(1.500, .500, 13, 15, '#b98a6a', V) + L('M2 4H14M2 8H14M2 12H14', '#e8f4e8', 2),
  rail, duct: F('M0 8L6 1H15V6L9 14H0Z', G) + L('M0 8H9V14M9 8L15 1', '#e0e0e0'),
  perf: R(0, 1, 16, 14, G) + `<path d="M2 4H15M2 8H15M2 12H15" stroke="#fff" stroke-width="1" stroke-dasharray="2 2"/>`,
  corner: L('M0 3H16M3 3V16', '#777', 5) + `<path d="M2 3H16M3 6V16" stroke="#ddd" stroke-width="2" stroke-dasharray="2 2"/>`,
  cup: L('M3 3V12H13V3H10M3 3H6', G, 3) + L('M6 4V9H10V4', '#d88'),
  rail2: L('M4 0V16M12 0V16', '#e2a84a', 2) + R(6, 0, 4, 16, G) + L('M6 3H10M6 7H10M6 11H10', '#fff'),
  omega: L('M1 14H5V11A5.500 5.500 0 1 1 11 11V14H15', '#999', 2), key: L('M0 8H10', '#999', 3) + C(12, 8, 3, '#fff', '#999', 2), strip: R(0, 5, 16, 6, '#999') + L('M2 11L5 5M7 11L10 5M12 11L15 5', '#9cd0ea'),
  place: R(0, 1, 8, 8, B) + C(11, 6, 4.500, B) + L('M3 15V10H7', '#fff', 4) + F('M4 9H7V6L14 11L7 16V13H4Z', B) + L('M7 6L14 11', '#fff'),
  brick: R(0, 0, 15, 6, '#c0605a') + L('M0 2H15M0 4H15', '#fff') + C(10, 10.500, 4.500, V) + L('M8 10L10 12L13 8', '#fff'),
  box1: L('M6.500 .500H15.500V8L10 14M6.500 .500L1 6M15.500 .500L9 7M6.500 .500V5', '#e8732a') + `<g transform="translate(-1 4)">${box3}</g>`, purp: R(1, 2, 14, 12, '#d8dcb0', '#8a00b0', 2) + L('M5.500 3V13M10.500 3V13', '#666'),
  spring: R(4, 0, 9, 16, '#5a9a96', '#376') + L('M5 2L11 5L5 8L11 11L5 14', '#e04a2a'),
  b1: box3 + R(6.500, 6.500, 9, 9, '#fff', '#d99a4a') + L('M9 9.500H13M9 12.500H13', '#c33'), b2: box3 + R(6, 6, 10, 10, '#fff') + L('M7 10C8 5 14 6 15 9M15 11C14 16 8 16 7 12', '#4a8ad0', 2),
  b3: `<rect x="2.500" y="2.500" width="11" height="12" fill="#777455" stroke="#1414a0" stroke-width="2" stroke-dasharray="2 2"/>` + R(0, 9, 4, 4, '#d00') + R(12, 0, 4, 4, '#d00'),
  b4: L('M1 3H15', '#d33', 2) + C(8, 3, 1.500, '#28c') + R(.500, 8.500, 7, 7, '#7fa55a', '#456'), b5: pour + L('M1 1L7 7M10 1L7 7', '#d22', 1.500) + L('M6 8L12 2', '#28c', 1.500),
  b6: pour + L('M5 3H13', '#28c', 1.500) + L('M9 3V10', '#d22'), b7: pour + L('M11 0V8M7 4H15M8 1L14 7M14 1L8 7', '#e8a33c'), b8: pour + X(9, 1),
  h1: L('M0 8H16M.500 4V12M15.500 4V12M4 6.500H12M4 9.500H12'), h2: L('M0 4.500H16M2 7.500H14M0 10.500H16'), h3: L('M2 1.500H15M0 4.500H16M2 7.500H15M0 10.500H16M2 13.500H15'),
  h4: L('M4 0V12H1M12 0V12H15M1 12V15M15 12V15', '#8a6a00', 2) + L('M3 11H11M8 8L11 11L8 14', V, 2) + R(11, 5, 2, 6, '#d33'),
  r1: R(2.500, .500, 12, 15, '#dfeeda', '#7aa06a'), r2: R(3, 1, 12, 14, G) + R(7, 5, 4, 6, '#fff') + R(.500, .500, 4, 4, '#fff', '#f60'), r3: R(3, 1, 12, 14, G) + R(7, 5, 4, 6, '#fff') + R(.500, 5.500, 4, 4, '#fff', '#0a0'),
  r4: R(4, 1, 9, 14, '#f4f8e8', '#3a7a10') + L('M8.500 1V15M4 5.500H13M4 10.500H13', '#3a7a10'), r5: L('M4 11V1M2 3L4 0L6 3', '#0010d0', 2) + L('M4 12L13 5', '#1a9a1a', 2) + L('M4 12L14 14', '#d00', 2),
  q1: F('M0 9L10 1L16 7L6 15Z', '#7cc070') + L('M2 9L14 7M6 4L10 12', '#4560b0'), q2: R(0, 0, 9, 3, '#7cc070') + R(5, 3, 4, 10, '#777') + R(3, 13, 10, 3, '#7cc070') + F('M10 2H14V6H16L12 11L9 6H10Z', '#e0905a'),
  q3: R(0, 0, 9, 3, '#7cc070') + R(3, 6, 10, 3, '#777') + R(5, 12, 11, 3, '#7cc070') + R(7, 3, 4, 9, '#777') + F('M11 1H15V5H16L13 9L10 5H11Z', '#e0905a'),
  q4: R(0, 1, 7, 6, '#7cc070', '#3a8a4a') + R(9, 8, 6, 7, '#7cc070', '#3a8a4a') + R(9, 1, 5, 4, '#7cc070') + L('M2 10L6 14', '#e0905a', 3),
  q5: R(1.500, 3.500, 11, 12, '#fff', '#777') + L('M1 3L4 .500H15.500V12L13 15', '#777') + L('M5 9L9 6V11L5 13Z', '#e0905a', 2),

  v1: F('M1 5L5 1H15L10 5Z', O) + cube, v2: F('M1 15L5 10H15L10 15Z', O) + cube + cubeBack, v3: F('M1 15V6L5 1V10Z', O) + cube + cubeBack,
  v4: F('M11 15V6L15 1V10Z', O) + cube, v5: F('M1 6H10V15H1Z', O) + cube, v6: F('M6 1H15V10H6Z', O) + cube,
  i1: F('M3 6L8 10V15L3 10Z', O) + iso, i2: F('M13 6L8 10V15L13 10Z', O) + iso, i3: F('M8 1L13 6V10L8 6Z', O) + iso, i4: F('M8 1L3 6V10L8 6Z', O) + iso,
  eye: C(8, 8, 7, 'none', V, 2) + R(12, 3, 4, 5, '#fff') + F('M9 1H15V7Z', V) + F('M3 8Q8 3 13 8Q8 13 3 8Z', '#f3d9a8') + C(8, 8, 2.300, '#2f6aa3'),
  a1: L('M1 15L15 1', G, 2), a2: L('M1 1V14L9 5L15 11', G, 2), a3: L('M5 2H15L12 6V10L15 14H5L1 11V5Z', G, 2), a4: R(1, 2, 14, 12, 'none', G, 2), a5: L('M15 6V2H1V14H15V11', G, 2) + L('M8 8H14') + cn(8, 8) + cn(14, 8),
  a6: C(8, 8, 7, 'none', G, 2), a7: C(8, 8, 7, 'none', G, 2) + cn(4, 3) + cn(14, 5) + cn(12, 13), a8: L('M12 3A7 7 0 1 0 13 13L8 8L12 3', G, 2) + cn(8, 8) + cn(12, 3) + cn(12, 13),
  a9: L('M12 2A7 7 0 1 0 14 12', G, 2) + cn(11, 2) + cn(2, 11) + cn(14, 12), a10: C(8, 8, 7, '#ddd', G, 2) + F('M8 8L7 2L2 5V12Z', '#fff') + L('M8 8V2') + cn(8, 8) + cn(7, 2) + cn(2, 12),
  a11: `<ellipse cx="8" cy="8" rx="7" ry="4.500" fill="none" stroke="#a0a0a0" stroke-width="2"/>`, a12: L('M2 14C12 14 4 3 14 2', G, 2) + cn(2, 14) + cn(14, 2),
  a13: F('M0 1H15V5H13L12 3H9V13H12V15H4V13H6V3H3L2 5H0Z'), a14: R(.500, .500, 15, 14, '#fff', G) + F('M2 13V9L5 7L8 10L11 6L14 9V13ZM3 5L6 2L9 5Z'),
  a15: `<g transform="rotate(-40 8 8)" fill="none" stroke="#a0a0a0" stroke-width="2"><rect x="-1" y="5" width="9" height="6" rx="3"/><rect x="7" y="5" width="9" height="6" rx="3"/></g>`,
  m1: L('M.500 4V12M15.500 4V12M1 8H15M4 5L1 8L4 11M12 5L15 8L12 11', G, 1.500), m2: L('M1 10L6 15M10 1L15 6M3 13L13 3M3 9V13H7M9 3H13V7', G, 1.500), m3: L('M.500 4V12M15.500 4V12M8 4V12M1 8H15M5 6V10M11 6V10', G, 1.500), m4: L('M.500 4V12M15.500 4V12M6 4V12M10 4V12M1 8H15', G, 1.500),
  m5: L('M.500 2V14M15.500 2V14M1 4H15M1 10H9M9.500 7V13M2 2V6M13 2V6M3 8V12', G, 1.500), m6: L('M1.500 1V14.500H16M2 14L10 4M10 3C13 5 14 8 14 13M8 5L11 3M12 11L14 13L16 11', G, 1.200), m7: C(6, 10, 5, 'none', G, 2) + C(6, 10, 1, G) + L('M10 6L15 1M10 2V6H14', G, 1.500),
  e1: L('M3 13V3H13', G, 2) + yn(3, 14) + yn(14, 3), e2: L('M3 3H13V13', G, 2) + yn(2, 3) + yn(13, 14), e3: L('M3 3V13H13', G, 2) + yn(3, 2) + yn(14, 13), e4: L('M13 3V13H3', G, 2) + yn(13, 2) + yn(2, 13),
  e5: L('M2 3H6V13M6 10L14 3', G, 2) + yn(2, 3) + yn(14, 3) + yn(6, 14), e6: L('M2 13H6V3M6 6L14 13', G, 2) + yn(2, 13) + yn(14, 13) + yn(6, 2), e7: L('M3 2V14L9 7H14', G, 2) + yn(3, 2) + yn(3, 14) + yn(14, 7), e8: L('M2 7H8L13 13V2', G, 2) + yn(2, 7) + yn(14, 2) + yn(14, 14),
  e9: L('M8 2V12M2 8L8 13L14 8', G, 2) + yn(8, 1) + yn(2, 8) + yn(14, 8) + yn(8, 14), e10: L('M2 9L8 13V3L14 7', G, 2) + yn(2, 9) + yn(8, 14) + yn(8, 2) + yn(14, 7),
  e11: L('M2 8H14', G, 2) + F('M8 3L13 8L8 13Z') + yn(2, 8) + yn(14, 8), e12: L('M3 3L13 13', G, 2) + yn(3, 3) + yn(13, 13)
};

/* tree connectors, drawn in 20 x 20 cells */
const dots = d => `<path d="${d}" fill="none" stroke="#909090" stroke-dasharray="1 1"/>`;
const boxed = s => R(4.500, 6.500, 8, 8, '#fff', '#919191') + L(s, '#2b4fa3');
const twigs = {
  twTop: dots('M8.500 20V10.500H20'), twEnd: dots('M8.500 0V10.500H20'), twPass: dots('M8.500 0V20'),
  twMinus: dots('M8.500 15V20M13 10.500H20') + boxed('M6 10.500H11'),
  twPlus: dots('M8.500 15V20M13 10.500H20') + boxed('M6 10.500H11M8.500 8V13'),
  twPlusUp: dots('M8.500 0V6M13 10.500H20') + boxed('M6 10.500H11M8.500 8V13')
};

/* "|" separator, ":" grip, "_" bar end; * pressed, ~ shaded */
const tools = {
  row1: ': newPage savePage pagePurple print | wrench | cut copy paste | selDel | brush1 brush | undoList undo redo redo | layout layoutGrey~ check table screen* : refresh zoomSel zoomIn zoomOut zoom100 | back fwd | gridA* gridB gridC gridD gridE | grid snap* gsel magnet magnetAxis conn ruler123 ruler | wave rss lattice : chip tree | cart tbox : link1 link2 sq jog | nodes nodeL nodeC nodeR nodeF | pin u1 u2 | g1 g2 | redS red : s1 s2 s3 s4 s5 s6 s7 s8',
  row2: ': winCart winCartG | puzzle | n123a n123b n123c | lines | flagCheck flagGear flagArrow | flagBook flagIn | flagDel : docs newDoc docA docB docL docR : yel | gridg | da db db | w1 f1 f2 f3 f4 f5 f6 f7 | c1 c2 | tri hatch dash : stamp | x1 x2 x3 | x4 x5 | x6 | rainbow : comb | dS dLC dBC dD dd NC DXF | kK kj kC kS kP kM kW kt kr : p1 p2 p3 p4 p5 : t1 t2 | t3 t4',
  row3: ': cab mcart mlist rail duct perf corner cup rail2 omega key strip | place : brick | box1 purp spring | b1 b2 b3 b4 b5 b6 b7 b8 h1 h2 h3 h4 : r1 r2 r3 r4 r5 | q1 q2 q3 q4 q5',
  left: ': v1 v2 v3 v4 v5 v6 | i1 i2 i3 i4 | eye _ : a1 a2 a3 a4 a5 | a6 a7 a8 a9 a10 a11 | a12 | a13 a14 a15 | m1 m2 m3 m4 m5 m6 m7 _',
  right: ': e1 e2 e3 e4 | e5 e6 e7 e8 | e9 e10 | e11 e12 _'
};
const glyph = n => n in twigs ? `<svg width="20" height="20" viewBox="0 0 20 20">${twigs[n]}</svg>` : `<svg width="16" height="16" viewBox="0 0 16 16">${I[n]}</svg>`;

document.querySelectorAll('[data-tools]').forEach(bar => {
  bar.innerHTML = tools[bar.dataset.tools].split(' ').map(t => {
    if (t === '|') return '<span class="sep"></span>';
    if (t === ':') return '<span class="grip"></span>';
    if (t === '_') return '<span class="end"></span>';
    const n = t.replace(/[*~]/, '');
    const cls = t.endsWith('*') ? ' on' : t.endsWith('~') ? ' dim' : '';
    return `<button class="tool${cls}" aria-label="${n}">${glyph(n)}</button>`;
  }).join('');
});
document.querySelectorAll('[data-icon]').forEach(el => {
  el.innerHTML = glyph(el.dataset.icon);
  if (el.dataset.icon === 'capx') el.firstChild.setAttribute('width', 9);
  if (el.dataset.icon === 'capx') el.firstChild.setAttribute('height', 9);
});
const src = document.getElementById('src');
src.focus();
src.select();
```
